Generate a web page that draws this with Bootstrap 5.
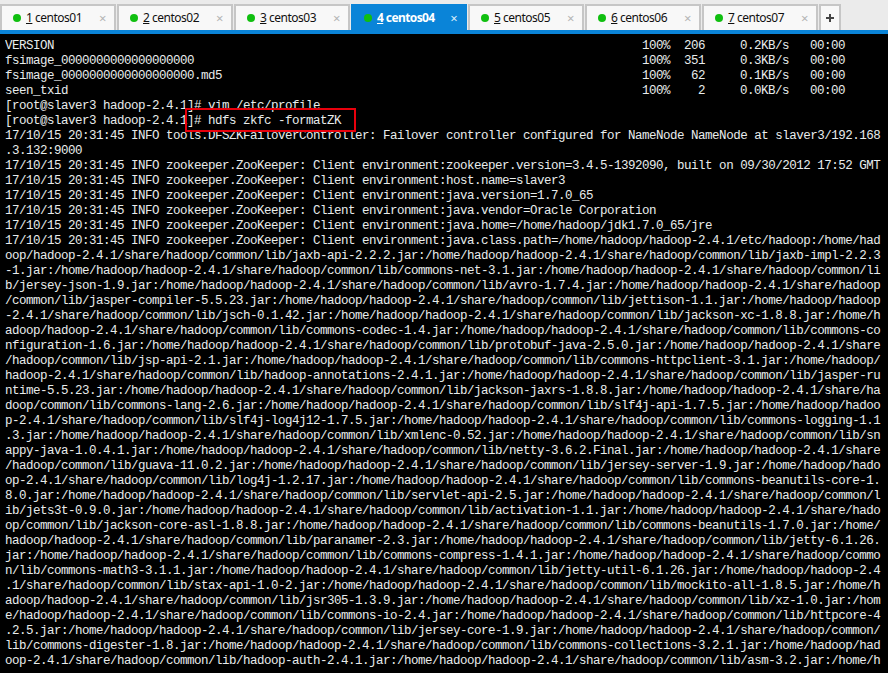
<!DOCTYPE html>
<html lang="en">
<head>
<meta charset="utf-8">
<title>centos04</title>
<link rel="stylesheet" href="https://cdn.jsdelivr.net/npm/bootstrap@5.3.0/dist/css/bootstrap.min.css">
<style>
html, body { height: 100%; overflow: hidden; background: #000; }
.tabstrip { height: 34px; padding-top: 4px; background: #ebebeb; border-bottom: 4px solid #0a84d8; gap: 1px; }
.term-tab { width: 116px; height: 26px; padding-left: 11px; padding-right: 8px; background: #f8f8f8; border: 2px solid #c6c6c6; border-bottom: 0; font: 12px/1 "Noto Sans", sans-serif; letter-spacing: -.5px; color: #111; }
.term-tab.is-on { background: #0a84d8; border-color: #0a84d8; color: #fff; font-weight: 700; letter-spacing: -.6px; }
.led { width: 8px; height: 8px; border-radius: 50%; background: #10bf10; margin-right: 5px; flex: none; }
.shut { margin-left: auto; color: #b4b4b4; font-size: 13px; font-weight: 400; }
.is-on .shut { color: #dcecf8; }
.add-tab { width: 22px; height: 26px; background: #f8f8f8; border: 2px solid #c6c6c6; border-bottom: 0; color: #444; }
.screen { position: relative; height: 639px; overflow: hidden; background: #000; padding: 5px 0 0 5px; }
.screen pre { margin: 0; overflow: hidden; font: 12.5px/15px "Liberation Mono", monospace; letter-spacing: -.5px; color: #e8ecec; }
.fname { display: inline-block; width: 637px; }
.callout { position: absolute; left: 185px; top: 74px; width: 171px; height: 24px; border: 2px solid #e8000c; pointer-events: none; }
</style>
</head>
<body>
<nav class="tabstrip d-flex">
  <div class="term-tab d-flex align-items-center"><span class="led"></span><span><u>1</u> centos01</span><span class="shut">×</span></div>
  <div class="term-tab d-flex align-items-center"><span class="led"></span><span><u>2</u> centos02</span><span class="shut">×</span></div>
  <div class="term-tab d-flex align-items-center"><span class="led"></span><span><u>3</u> centos03</span><span class="shut">×</span></div>
  <div class="term-tab is-on d-flex align-items-center"><span class="led"></span><span><u>4</u> centos04</span><span class="shut">×</span></div>
  <div class="term-tab d-flex align-items-center"><span class="led"></span><span><u>5</u> centos05</span><span class="shut">×</span></div>
  <div class="term-tab d-flex align-items-center"><span class="led"></span><span><u>6</u> centos06</span><span class="shut">×</span></div>
  <div class="term-tab d-flex align-items-center"><span class="led"></span><span><u>7</u> centos07</span><span class="shut">×</span></div>
  <div class="add-tab d-flex align-items-center justify-content-center"><svg width="10" height="10" viewBox="0 0 10 10"><path d="M5 1v8M1 5h8" stroke="#444" stroke-width="2"/></svg></div>
</nav>
<main class="screen">
<pre><span class="fname">VERSION</span>100%  206     0.2KB/s   00:00
<span class="fname">fsimage_0000000000000000000</span>100%  351     0.3KB/s   00:00
<span class="fname">fsimage_0000000000000000000.md5</span>100%   62     0.1KB/s   00:00
<span class="fname">seen_txid</span>100%    2     0.0KB/s   00:00
[root@slaver3 hadoop-2.4.1]# vim /etc/profile
[root@slaver3 hadoop-2.4.1]# hdfs zkfc -formatZK
17/10/15 20:31:45 INFO tools.DFSZKFailoverController: Failover controller configured for NameNode NameNode at slaver3/192.168
.3.132:9000
17/10/15 20:31:45 INFO zookeeper.ZooKeeper: Client environment:zookeeper.version=3.4.5-1392090, built on 09/30/2012 17:52 GMT
17/10/15 20:31:45 INFO zookeeper.ZooKeeper: Client environment:host.name=slaver3
17/10/15 20:31:45 INFO zookeeper.ZooKeeper: Client environment:java.version=1.7.0_65
17/10/15 20:31:45 INFO zookeeper.ZooKeeper: Client environment:java.vendor=Oracle Corporation
17/10/15 20:31:45 INFO zookeeper.ZooKeeper: Client environment:java.home=/home/hadoop/jdk1.7.0_65/jre
17/10/15 20:31:45 INFO zookeeper.ZooKeeper: Client environment:java.class.path=/home/hadoop/hadoop-2.4.1/etc/hadoop:/home/had
oop/hadoop-2.4.1/share/hadoop/common/lib/jaxb-api-2.2.2.jar:/home/hadoop/hadoop-2.4.1/share/hadoop/common/lib/jaxb-impl-2.2.3
-1.jar:/home/hadoop/hadoop-2.4.1/share/hadoop/common/lib/commons-net-3.1.jar:/home/hadoop/hadoop-2.4.1/share/hadoop/common/li
b/jersey-json-1.9.jar:/home/hadoop/hadoop-2.4.1/share/hadoop/common/lib/avro-1.7.4.jar:/home/hadoop/hadoop-2.4.1/share/hadoop
/common/lib/jasper-compiler-5.5.23.jar:/home/hadoop/hadoop-2.4.1/share/hadoop/common/lib/jettison-1.1.jar:/home/hadoop/hadoop
-2.4.1/share/hadoop/common/lib/jsch-0.1.42.jar:/home/hadoop/hadoop-2.4.1/share/hadoop/common/lib/jackson-xc-1.8.8.jar:/home/h
adoop/hadoop-2.4.1/share/hadoop/common/lib/commons-codec-1.4.jar:/home/hadoop/hadoop-2.4.1/share/hadoop/common/lib/commons-co
nfiguration-1.6.jar:/home/hadoop/hadoop-2.4.1/share/hadoop/common/lib/protobuf-java-2.5.0.jar:/home/hadoop/hadoop-2.4.1/share
/hadoop/common/lib/jsp-api-2.1.jar:/home/hadoop/hadoop-2.4.1/share/hadoop/common/lib/commons-httpclient-3.1.jar:/home/hadoop/
hadoop-2.4.1/share/hadoop/common/lib/hadoop-annotations-2.4.1.jar:/home/hadoop/hadoop-2.4.1/share/hadoop/common/lib/jasper-ru
ntime-5.5.23.jar:/home/hadoop/hadoop-2.4.1/share/hadoop/common/lib/jackson-jaxrs-1.8.8.jar:/home/hadoop/hadoop-2.4.1/share/ha
doop/common/lib/commons-lang-2.6.jar:/home/hadoop/hadoop-2.4.1/share/hadoop/common/lib/slf4j-api-1.7.5.jar:/home/hadoop/hadoo
p-2.4.1/share/hadoop/common/lib/slf4j-log4j12-1.7.5.jar:/home/hadoop/hadoop-2.4.1/share/hadoop/common/lib/commons-logging-1.1
.3.jar:/home/hadoop/hadoop-2.4.1/share/hadoop/common/lib/xmlenc-0.52.jar:/home/hadoop/hadoop-2.4.1/share/hadoop/common/lib/sn
appy-java-1.0.4.1.jar:/home/hadoop/hadoop-2.4.1/share/hadoop/common/lib/netty-3.6.2.Final.jar:/home/hadoop/hadoop-2.4.1/share
/hadoop/common/lib/guava-11.0.2.jar:/home/hadoop/hadoop-2.4.1/share/hadoop/common/lib/jersey-server-1.9.jar:/home/hadoop/hado
op-2.4.1/share/hadoop/common/lib/log4j-1.2.17.jar:/home/hadoop/hadoop-2.4.1/share/hadoop/common/lib/commons-beanutils-core-1.
8.0.jar:/home/hadoop/hadoop-2.4.1/share/hadoop/common/lib/servlet-api-2.5.jar:/home/hadoop/hadoop-2.4.1/share/hadoop/common/l
ib/jets3t-0.9.0.jar:/home/hadoop/hadoop-2.4.1/share/hadoop/common/lib/activation-1.1.jar:/home/hadoop/hadoop-2.4.1/share/hado
op/common/lib/jackson-core-asl-1.8.8.jar:/home/hadoop/hadoop-2.4.1/share/hadoop/common/lib/commons-beanutils-1.7.0.jar:/home/
hadoop/hadoop-2.4.1/share/hadoop/common/lib/paranamer-2.3.jar:/home/hadoop/hadoop-2.4.1/share/hadoop/common/lib/jetty-6.1.26.
jar:/home/hadoop/hadoop-2.4.1/share/hadoop/common/lib/commons-compress-1.4.1.jar:/home/hadoop/hadoop-2.4.1/share/hadoop/commo
n/lib/commons-math3-3.1.1.jar:/home/hadoop/hadoop-2.4.1/share/hadoop/common/lib/jetty-util-6.1.26.jar:/home/hadoop/hadoop-2.4
.1/share/hadoop/common/lib/stax-api-1.0-2.jar:/home/hadoop/hadoop-2.4.1/share/hadoop/common/lib/mockito-all-1.8.5.jar:/home/h
adoop/hadoop-2.4.1/share/hadoop/common/lib/jsr305-1.3.9.jar:/home/hadoop/hadoop-2.4.1/share/hadoop/common/lib/xz-1.0.jar:/hom
e/hadoop/hadoop-2.4.1/share/hadoop/common/lib/commons-io-2.4.jar:/home/hadoop/hadoop-2.4.1/share/hadoop/common/lib/httpcore-4
.2.5.jar:/home/hadoop/hadoop-2.4.1/share/hadoop/common/lib/jersey-core-1.9.jar:/home/hadoop/hadoop-2.4.1/share/hadoop/common/
lib/commons-digester-1.8.jar:/home/hadoop/hadoop-2.4.1/share/hadoop/common/lib/commons-collections-3.2.1.jar:/home/hadoop/had
oop-2.4.1/share/hadoop/common/lib/hadoop-auth-2.4.1.jar:/home/hadoop/hadoop-2.4.1/share/hadoop/common/lib/asm-3.2.jar:/home/h</pre>
<div class="callout"></div>
</main>
</body>
</html>
